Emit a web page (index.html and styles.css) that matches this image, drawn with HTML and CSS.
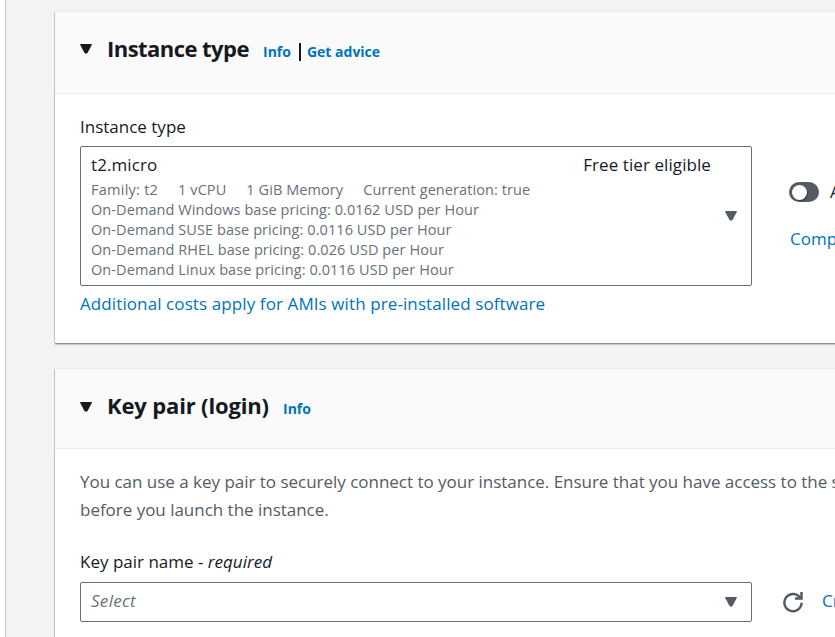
FILE: index.html
```html
<!DOCTYPE html>
<html lang="en">
<head>
<meta charset="utf-8">
<title>Launch an instance</title>
<link rel="stylesheet" href="styles.css">
</head>
<body>
<main class="page">
  <section class="card">
    <header class="card-header">
      <svg class="caret" viewBox="0 0 14 12"><path d="M1.5 1.5h11L8 10H6z"/></svg>
      <h2 class="t-instance">Instance type</h2>
      <a class="info">Info</a><span class="divider"></span><a class="info advice">Get advice</a>
    </header>
    <div class="card-body">
      <div class="label">Instance type</div>
      <div class="row">
        <div class="select select-tall">
          <div class="option">
            <div class="option-top"><span class="t-micro">t2.micro</span><span class="t-free">Free tier eligible</span></div>
            <div class="specs"><span class="family">Family: t2</span><span>1 vCPU</span><span>1 GiB Memory</span><span>Current generation: true</span></div>
            <div class="price">On-Demand Windows base pricing: 0.0162 USD per Hour</div>
            <div class="price">On-Demand SUSE base pricing: 0.0116 USD per Hour</div>
            <div class="price">On-Demand RHEL base pricing: 0.026 USD per Hour</div>
            <div class="price">On-Demand Linux base pricing: 0.0116 USD per Hour</div>
          </div>
          <svg class="caret muted" viewBox="0 0 14 12"><path d="M1.5 1.5h11L8 10H6z"/></svg>
        </div>
        <div class="side">
          <div class="toggle-row"><span class="toggle"></span><span>A</span></div>
          <a class="compare">Comp</a>
        </div>
      </div>
      <a class="costs">Additional costs apply for AMIs with pre-installed software</a>
    </div>
  </section>
  <section class="card card-key">
    <header class="card-header header-key">
      <svg class="caret" viewBox="0 0 14 12"><path d="M1.5 1.5h11L8 10H6z"/></svg>
      <h2 class="t-key">Key pair (login)</h2>
      <a class="info">Info</a>
    </header>
    <div class="card-body body-key">
      <p class="description">You can use a key pair to securely connect to your instance. Ensure that you have access to the s<br>before you launch the instance.</p>
      <div class="label label-key">Key pair name - <em>required</em></div>
      <div class="row">
        <div class="select select-short"><em class="placeholder">Select</em>
          <svg class="caret muted" viewBox="0 0 14 12"><path d="M1.5 1.5h11L8 10H6z"/></svg>
        </div>
        <svg class="refresh" viewBox="0 0 22 22"><path d="M18.4 7.2A8.6 8.6 0 1 0 19.6 11.8"/><path d="M19.5 1v6.5H13"/></svg>
        <a class="create">Cr</a>
      </div>
    </div>
  </section>
</main>
</body>
</html>
```
FILE: styles.css
```css
* { box-sizing: border-box; }
body {
  margin: 0;
  height: 637px;
  overflow: hidden;
  background: #fff;
  color: #16191f;
  font: 17px/25px "Open Sans", "Noto Sans", sans-serif;
}
.page {
  margin-left: 5px;
  height: 637px;
  padding: 12px 0 0 49px;
  border-left: 1px solid #c3c7cb;
  background: #f2f3f3;
  overflow: hidden;
}
.card {
  width: 900px;
  height: 331px;
  background: #fff;
  box-shadow: 0 -1px 0 #eaeded, -1px 0 0 #bdc3c5, 0 1px 0 #879596, 0 2px 1px #c6cccc;
}
.card-key { height: 300px; margin-top: 26px; }
.card-header {
  display: flex;
  height: 82px;
  padding: 21px 0 0 24px;
  border-bottom: 1px solid #eaeded;
  background: #fafafa;
  white-space: nowrap;
}
.header-key { height: 80px; }
.caret { width: 14px; height: 12px; flex: none; fill: #16191f; stroke: #16191f; stroke-width: 1; stroke-linejoin: round; }
.card-header .caret { margin-top: 10px; }
.header-key .caret { margin-top: 11px; }
h2 { margin: -1px 0 0 14px; font-size: 22px; line-height: 32px; font-weight: 700; width: 156px; letter-spacing: -.55px; }
h2.t-key { width: 176px; letter-spacing: -.15px; }
a { color: #0073bb; }
.info { font-size: 14px; font-weight: 700; line-height: 38px; }
.divider { width: 2px; height: 18px; background: #16191f; margin: 10px 6px 0 8px; }
.card-body { padding: 20px 0 0 25px; white-space: nowrap; }
.label { height: 32px; }
.row { display: flex; }
.select {
  display: flex;
  width: 672px;
  flex: none;
  border: 1px solid #687078;
  border-radius: 2px;
  background: #fff;
}
.muted { fill: #545b64; stroke: #545b64; }
.select-tall { height: 140px; padding: 5px 13px 0 10px; justify-content: space-between; }
.select-tall .muted { margin-top: 58px; }
.option { width: 620px; }
.option-top { display: flex; justify-content: space-between; height: 28px; line-height: 25px; letter-spacing: .08px; }
.specs { display: flex; gap: 20px; }
.specs, .price { color: #687078; font-size: 14.5px; height: 20px; line-height: 20px; letter-spacing: .08px; }
.family { letter-spacing: .25px; }
.side { margin-left: 37px; padding-top: 33px; }
.toggle-row { display: flex; gap: 11px; }
.toggle { width: 30px; height: 20px; padding: 3px; border-radius: 10px; background: #545b64; margin-top: 3px; }
.toggle::before { content: ""; display: block; width: 15px; height: 15px; border-radius: 50%; background: #fff; box-shadow: 1px 1px 1px #343a42; }
.compare { display: block; margin: 22px 0 0 1px; }
.costs { display: block; margin-top: 5px; letter-spacing: .1px; }
.body-key { padding-top: 19px; }
.description { margin: 0; line-height: 28px; color: #545b64; letter-spacing: -.02px; }
.label-key { margin-top: 25px; height: 33px; }
.select-short { height: 40px; padding: 5px 13px 0 10px; justify-content: space-between; }
.placeholder { color: #687078; letter-spacing: .3px; }
.select-short .muted { margin-top: 8px; }
.refresh { width: 22px; height: 22px; margin: 9px 0 0 30px; fill: none; stroke: #545b64; stroke-width: 2.5; flex: none; }
.create { margin: 6px 0 0 18px; }
```
